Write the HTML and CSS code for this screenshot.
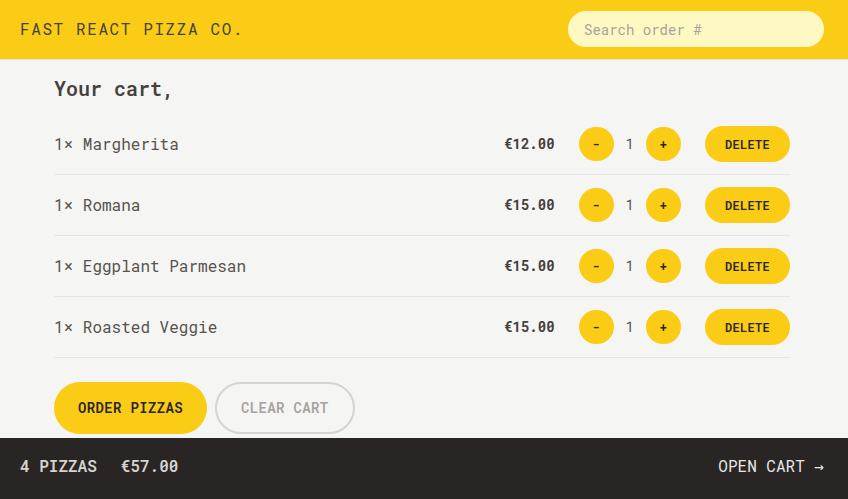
FILE: index.html
```html
<!DOCTYPE html>
<html lang="en">
<head>
<meta charset="utf-8">
<title>Fast React Pizza Co.</title>
<link rel="stylesheet" href="styles.css">
</head>
<body>
<div class="app">
  <header class="header">
    <a class="logo" href="#">Fast React Pizza Co.</a>
    <input class="search" type="text" placeholder="Search order #">
  </header>
  <main class="main">
    <div class="cart">
      <h2 class="title">Your cart,</h2>
      <ul class="items">
        <li class="item">
          <p class="name">1&times; Margherita</p>
          <div class="controls">
            <p class="price">€12.00</p>
            <div class="qty">
              <button class="btn round">-</button>
              <span class="count">1</span>
              <button class="btn round">+</button>
            </div>
            <button class="btn small">Delete</button>
          </div>
        </li>
        <li class="item">
          <p class="name">1&times; Romana</p>
          <div class="controls">
            <p class="price">€15.00</p>
            <div class="qty">
              <button class="btn round">-</button>
              <span class="count">1</span>
              <button class="btn round">+</button>
            </div>
            <button class="btn small">Delete</button>
          </div>
        </li>
        <li class="item">
          <p class="name">1&times; Eggplant Parmesan</p>
          <div class="controls">
            <p class="price">€15.00</p>
            <div class="qty">
              <button class="btn round">-</button>
              <span class="count">1</span>
              <button class="btn round">+</button>
            </div>
            <button class="btn small">Delete</button>
          </div>
        </li>
        <li class="item">
          <p class="name">1&times; Roasted Veggie</p>
          <div class="controls">
            <p class="price">€15.00</p>
            <div class="qty">
              <button class="btn round">-</button>
              <span class="count">1</span>
              <button class="btn round">+</button>
            </div>
            <button class="btn small">Delete</button>
          </div>
        </li>
      </ul>
      <div class="actions">
        <button class="btn primary">Order pizzas</button>
        <button class="btn secondary">Clear cart</button>
      </div>
    </div>
  </main>
  <footer class="footer">
    <p class="summary"><span>4 pizzas</span><span>€57.00</span></p>
    <a class="open" href="#">Open cart &rarr;</a>
  </footer>
</div>
</body>
</html>
```
FILE: styles.css
```css
* { box-sizing: border-box; }
html, body { margin: 0; padding: 0; }
body {
  font-family: "Roboto Mono", "DejaVu Sans Mono", "Liberation Mono", monospace;
  background: #f5f5f4;
  color: #44403c;
  height: 499px;
  overflow: hidden;
}
p { margin: 0; }
ul { margin: 0; padding: 0; list-style: none; }
a { text-decoration: none; color: inherit; }
button { font-family: inherit; border: 0; cursor: pointer; }

.app {
  height: 499px;
  display: grid;
  grid-template-rows: auto 1fr auto;
}

.header {
  background: #facc15;
  border-bottom: 1px solid #e7e5e4;
  padding: 11px 24px 12px 20px;
  height: 60px;
  display: flex;
  align-items: center;
  justify-content: space-between;
  text-transform: uppercase;
}
.logo {
  font-size: 16px;
  line-height: 24px;
  letter-spacing: 0.1em;
  color: #44403c;
}
.search {
  width: 256px;
  height: 36px;
  border: 0;
  border-radius: 9999px;
  background: #fef9c3;
  padding: 8px 16px;
  font-family: inherit;
  font-size: 14px;
  line-height: 20px;
  color: #44403c;
  outline: none;
}
.search::placeholder { color: #a8a29e; }

.main { overflow: hidden; }
.cart {
  width: 736px;
  margin-left: 54px;
  padding-top: 14px;
}
.title {
  margin: 0;
  font-size: 20px;
  line-height: 28px;
  font-weight: 600;
}
.items {
  margin-top: 12px;
  border-bottom: 1px solid #e7e5e4;
}
.item {
  display: flex;
  align-items: center;
  justify-content: space-between;
  padding: 12px 0;
  height: 61px;
  border-top: 1px solid #e7e5e4;
}
.item:first-child { border-top: 0; height: 60px; }
.name { font-size: 16px; line-height: 24px; color: #57534e; }
.controls {
  display: flex;
  align-items: center;
  gap: 24px;
}
.price { font-size: 14px; line-height: 20px; font-weight: 700; }
.qty { display: flex; align-items: center; gap: 12px; }
.count { font-size: 14px; line-height: 20px; font-weight: 400; color: #57534e; }

.btn {
  background: #facc15;
  color: #292524;
  font-weight: 600;
  text-transform: uppercase;
  letter-spacing: 0.025em;
  border-radius: 9999px;
}
.round {
  font-size: 12px;
  line-height: 20px;
  padding: 7px 13px;
  width: 35px;
  height: 34px;
}
.small {
  font-size: 12px;
  line-height: 16px;
  padding: 10px 20px;
}
.actions {
  margin-top: 24px;
  display: flex;
  gap: 8px;
}
.primary {
  font-size: 14px;
  line-height: 20px;
  padding: 16px 24px;
}
.secondary {
  background: transparent;
  border: 2px solid #d6d3d1;
  color: #a8a29e;
  font-size: 14px;
  line-height: 20px;
  padding: 14px 24px;
}

.footer {
  background: #292524;
  color: #e7e5e4;
  text-transform: uppercase;
  display: flex;
  align-items: center;
  justify-content: space-between;
  height: 61px;
  padding: 0 24px 6px 20px;
  font-size: 16px;
  line-height: 24px;
}
.summary {
  display: flex;
  gap: 24px;
  color: #d6d3d1;
  font-weight: 600;
}
.open { color: #e7e5e4; }
```
